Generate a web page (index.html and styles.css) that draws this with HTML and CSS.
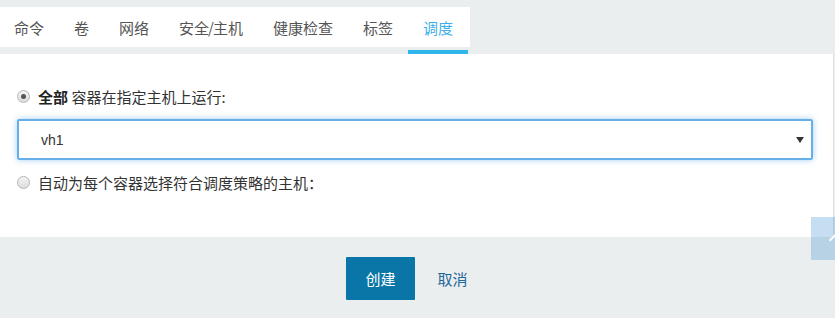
FILE: index.html
```html
<!DOCTYPE html>
<html lang="zh">
<head>
<meta charset="utf-8">
<title>调度</title>
<link rel="stylesheet" href="styles.css">
</head>
<body>
<div class="tabs">
  <a class="tab">命令</a>
  <a class="tab">卷</a>
  <a class="tab">网络</a>
  <a class="tab">安全<span class="slash">/</span>主机</a>
  <a class="tab">健康检查</a>
  <a class="tab">标签</a>
  <a class="tab active">调度</a>
</div>
<div class="panel">
  <label class="radio-row">
    <span class="radio checked"></span>
    <span class="label-text"><b>全部</b> 容器在指定主机上运行:</span>
  </label>
  <div class="select">
    <span class="select-value">vh1</span>
    <span class="caret"></span>
  </div>
  <label class="radio-row second">
    <span class="radio"></span>
    <span class="label-text">自动为每个容器选择符合调度策略的主机：</span>
  </label>
</div>
<div class="actions">
  <button class="btn primary">创建</button>
  <button class="btn link">取消</button>
</div>
<div class="back-top"><span class="chev"></span></div>
</body>
</html>
```
FILE: styles.css
```css
html, body {
  margin: 0;
  padding: 0;
}
body {
  background: #ebeeef;
  font-family: "Noto Sans CJK SC", "Liberation Sans", sans-serif;
  font-size: 15px;
  color: #333;
  overflow: hidden;
}
.tabs {
  display: inline-flex;
  margin-top: 7px;
  height: 40px;
  padding-right: 2px;
  background: #fff;
}
.tab {
  position: relative;
  display: block;
  padding: 0 15px;
  line-height: 42px;
  height: 40px;
  color: #555;
  font-size: 15px;
}
.tab:first-child {
  padding-left: 14px;
}
.slash {
  margin: 0 -1px;
}
.tab.active {
  color: #3eaee8;
}
.tab.active::after {
  content: "";
  position: absolute;
  left: 0;
  right: 0;
  bottom: -7px;
  height: 4px;
  background: #2fb6ec;
}
.panel {
  margin-top: 7px;
  height: 183px;
  width: 834px;
  box-sizing: border-box;
  background: #fff;
  border-right: 1px solid #dfe3e5;
  padding: 32px 20px 0 17px;
}
.radio-row {
  display: flex;
  align-items: center;
  height: 20px;
  gap: 8px;
}
.radio-row.second {
  margin-top: 12px;
}
.radio {
  width: 11px;
  height: 11px;
  border-radius: 50%;
  border: 1px solid #b5b5b5;
  background: linear-gradient(#f4f4f4, #dcdcdc);
  position: relative;
  flex: none;
}
.radio.checked::after {
  content: "";
  position: absolute;
  left: 3px;
  top: 3px;
  width: 5px;
  height: 5px;
  border-radius: 50%;
  background: #555;
}
.label-text b {
  color: #222;
  font-weight: 700;
}
.select {
  margin-top: 13px;
  height: 41px;
  box-sizing: border-box;
  border: 2px solid #66afe9;
  border-radius: 2px;
  box-shadow: 0 0 6px rgba(102, 175, 233, 0.6);
  display: flex;
  align-items: center;
  justify-content: space-between;
  padding: 0 7px 0 22px;
  font-family: "Liberation Sans", sans-serif;
  font-size: 14px;
  color: #333;
}
.caret {
  width: 0;
  height: 0;
  border-left: 4px solid transparent;
  border-right: 4px solid transparent;
  border-top: 6px solid #333;
  margin-top: 1px;
}
.actions {
  display: flex;
  justify-content: center;
  padding-top: 20px;
  padding-right: 2px;
}
.btn {
  font-family: "Noto Sans CJK SC", "Liberation Sans", sans-serif;
  font-size: 15px;
  height: 43px;
  border: 0;
  border-radius: 1px;
  padding: 0 19px;
  cursor: pointer;
}
.btn.primary {
  background: #0a76a7;
  color: #fff;
}
.btn.link {
  background: transparent;
  color: #23679a;
  margin-left: 4px;
}
.back-top {
  position: fixed;
  top: 217px;
  right: -16px;
  width: 40px;
  height: 43px;
  background: rgba(51, 136, 204, 0.28);
}
.chev {
  position: absolute;
  left: 20px;
  top: 18px;
  width: 8px;
  height: 8px;
  border-left: 2px solid #fff;
  border-top: 2px solid #fff;
  transform: rotate(45deg);
}
```
